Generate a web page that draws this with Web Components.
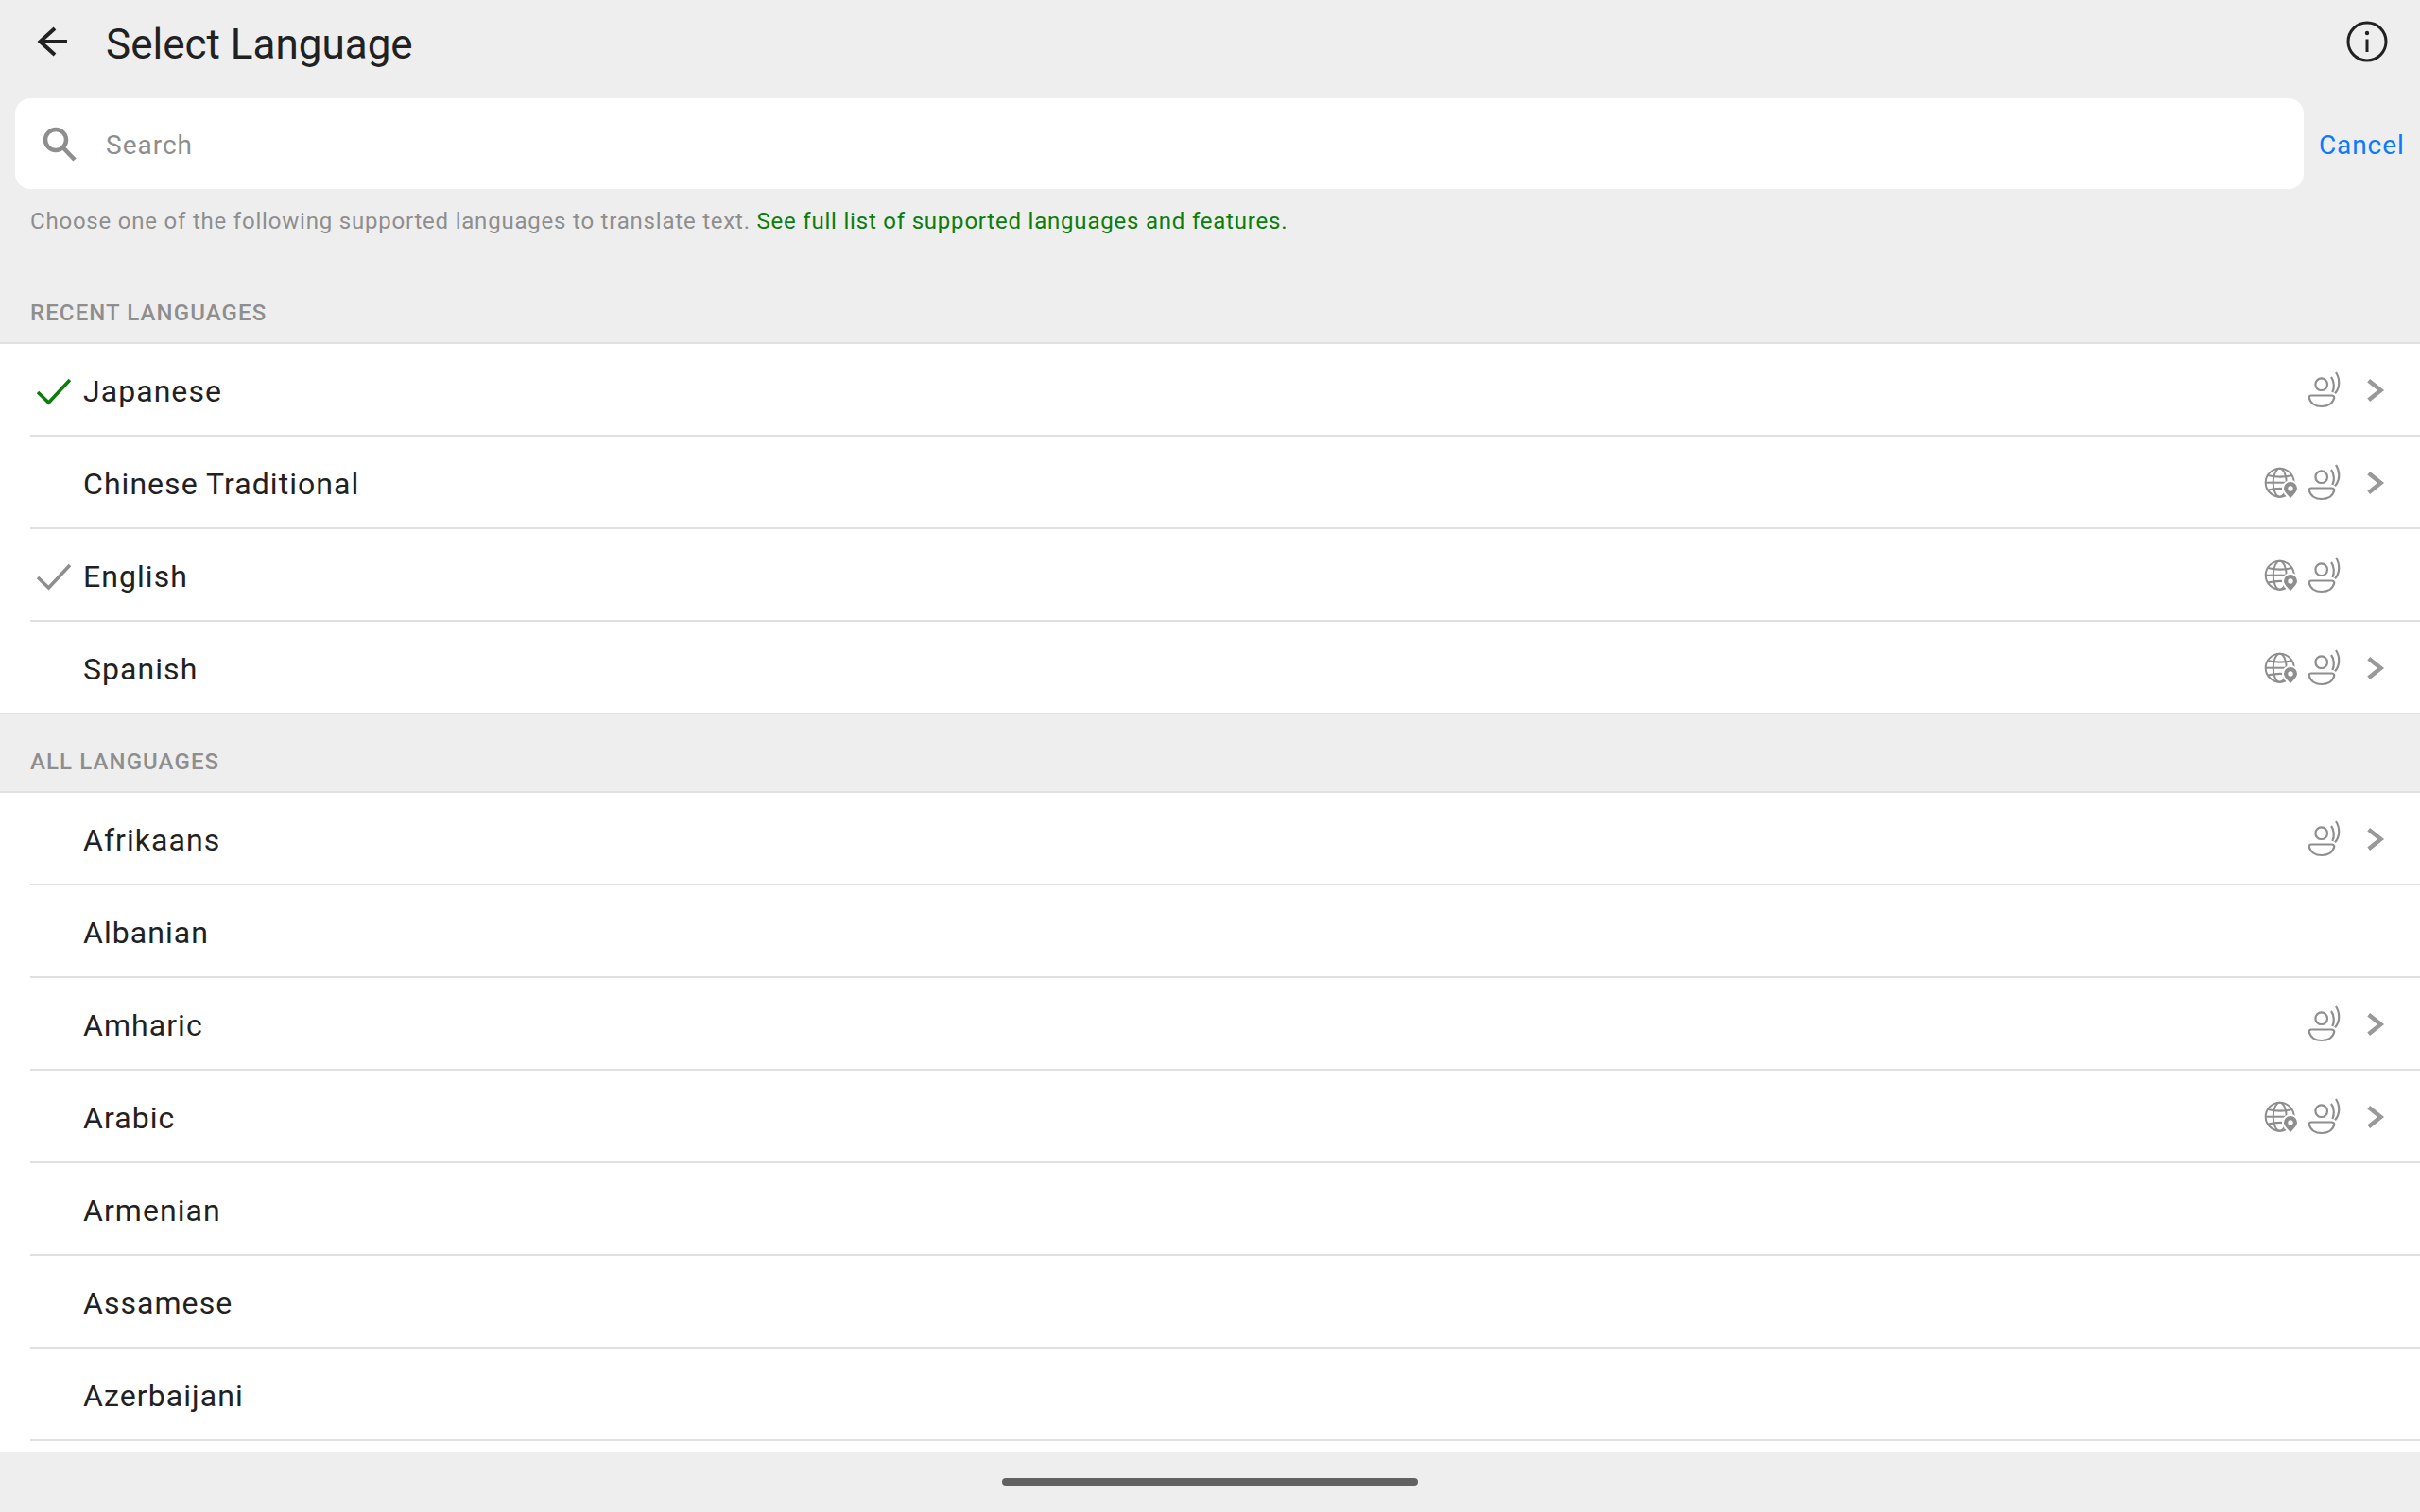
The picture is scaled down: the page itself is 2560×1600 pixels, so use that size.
<!DOCTYPE html>
<html lang="en"><head><meta charset="utf-8"><title>Select Language</title>
<style>
html,body{margin:0;height:100%;background:#eeeeee}
body{font-family:Roboto,"Liberation Sans",sans-serif}
</style></head>
<body>
<language-screen>
  <screen-header title="Select Language"></screen-header>
  <search-bar placeholder="Search" action="Cancel"></search-bar>
  <help-text>Choose one of the following supported languages to translate text. <a slot="link">See full list of supported languages and features.</a></help-text>
  <lang-section label="RECENT LANGUAGES" first>
    <lang-row check="green" voice chevron>Japanese</lang-row>
    <lang-row globe voice chevron>Chinese Traditional</lang-row>
    <lang-row check="gray" globe voice>English</lang-row>
    <lang-row globe voice chevron last>Spanish</lang-row>
  </lang-section>
  <lang-section label="ALL LANGUAGES">
    <lang-row voice chevron>Afrikaans</lang-row>
    <lang-row>Albanian</lang-row>
    <lang-row voice chevron>Amharic</lang-row>
    <lang-row globe voice chevron>Arabic</lang-row>
    <lang-row>Armenian</lang-row>
    <lang-row>Assamese</lang-row>
    <lang-row>Azerbaijani</lang-row>
  </lang-section>
  <home-bar></home-bar>
</language-screen>
<script>
function def(name, html, init){
  customElements.define(name, class extends HTMLElement{
    constructor(){super();this.attachShadow({mode:'open'}).innerHTML=html;}
    connectedCallback(){ if(init) init(this, this.shadowRoot); }
  });
}
def('language-screen',`<style>
:host{display:flex;flex-direction:column;height:1600px;width:2560px;overflow:hidden;background:#eee}
</style><slot></slot>`);

def('screen-header',`<style>
:host{display:flex;align-items:center;box-sizing:border-box;height:104px;padding-bottom:16px;flex:none;color:#212121}
.back{width:48px;height:48px;margin-left:32px;flex:none}
h1{margin:6px 0 0 32px;font:400 44px/52px Roboto,sans-serif;flex:1}
.info{width:48px;height:48px;margin-right:32px;flex:none}
svg{display:block}
</style>
<svg class="back" viewBox="0 0 48 48" fill="none" stroke="#212121" stroke-width="4"><path d="M39 24H11"/><path d="M26 10 10.500 24 26 38"/></svg>
<h1></h1>
<svg class="info" viewBox="0 0 48 48" fill="none" stroke="#212121"><circle cx="24" cy="24" r="20" stroke-width="3"/><path d="M24 21.500V35" stroke-width="3"/><circle cx="24" cy="15" r="2.200" fill="#212121" stroke="none"/></svg>`,
(el,s)=>{s.querySelector('h1').textContent=el.getAttribute('title');});

def('search-bar',`<style>
:host{display:flex;align-items:center;flex:none;padding-left:16px;height:96px}
.box{width:2421px;height:96px;box-sizing:border-box;background:#fff;border-radius:16px;display:flex;align-items:center;flex:none}
svg{width:40px;height:40px;margin-left:26px;flex:none}
.ph{margin:4px 0 0 30px;font:400 28px/36px Roboto,sans-serif;letter-spacing:1px;color:#8e8e8e}
.act{margin:4px 0 0 16px;font:400 28px/36px Roboto,sans-serif;letter-spacing:.9px;color:#0a7aff}
</style>
<div class="box"><svg viewBox="0 0 40 40" fill="none" stroke="#8e8e8e" stroke-width="4.500"><circle cx="17" cy="16" r="11"/><path d="M25 24.500 37 37"/></svg><span class="ph"></span></div><span class="act"></span>`,
(el,s)=>{s.querySelector('.ph').textContent=el.getAttribute('placeholder');s.querySelector('.act').textContent=el.getAttribute('action');});

def('help-text',`<style>
:host{display:block;flex:none;padding:18px 32px 0;height:58px;font:400 24px/32px Roboto,sans-serif;letter-spacing:.79px;color:#8e8e8e}
::slotted(a){color:#0a7d0a}
</style><slot></slot><slot name="link"></slot>`);

def('lang-section',`<style>
:host{display:block;flex:none}
.h{display:flex;align-items:flex-end;box-sizing:border-box;padding:0 32px 15px;font:500 24px/32px Roboto,sans-serif;letter-spacing:1.1px;color:#8e8e8e;height:81px}
:host([first]) .h{height:86px;padding-bottom:15px}
.b{background:#fff;border-top:2px solid #e0e0e0;padding-bottom:12px}
:host([first]) .b{padding-bottom:0}
</style><div class="h"></div><div class="b"><slot></slot></div>`,
(el,s)=>{s.querySelector('.h').textContent=el.getAttribute('label');});

const GLOBE=`<svg class="g" viewBox="0 0 40 48" fill="none" stroke="#8e8e8e" stroke-width="2"><circle cx="19.700" cy="24.700" r="15"/><ellipse cx="19.700" cy="24.700" rx="7" ry="15"/><path d="M4.700 24.700h30"/><path d="M7 17c8 2 18 2 26 0M7 32.500c8-2 18-2 26 0"/><path d="M31 43c-2-3.500-8-7-8-12a8 8 0 0 1 16 0c0 5-6 8.500-8 12z" fill="#8e8e8e" stroke="#fff" stroke-width="2"/><circle cx="31" cy="31" r="2.700" fill="#fff" stroke="none"/></svg>`;
const VOICE=`<svg class="v" viewBox="0 0 40 48" fill="none" stroke="#8e8e8e" stroke-width="2.200"><circle cx="19.700" cy="18.700" r="6.300"/><path d="M9 30.500h21.500c2 0 3 1 2.700 2.500C32 38.500 27 42 20 42S8 38.500 6.800 33c-.3-1.500.5-2.500 2.200-2.500z"/><path d="M30 11c3.500 4.500 3.500 11.500 1.300 16"/><path d="M35 6c4.500 7 4.500 16-1 22.300"/></svg>`;
const CHEV=`<svg class="c" viewBox="0 0 32 48" fill="none" stroke="#999" stroke-width="4.500"><path d="M9.700 14.700 22.500 25 9.700 35.300"/></svg>`;
const CHECK=c=>`<svg class="k" viewBox="0 0 40 48" fill="none" stroke="${c}" stroke-width="3.600"><path d="M5 27 16.500 38 39 14"/></svg>`;

def('lang-row',`<style>
:host{display:block;padding-left:32px}
:host([last]){padding-left:0}
.r{height:96px;border-bottom:2px solid #e0e0e0;display:flex;align-items:center}
:host([last]) .r{padding-left:32px}
.m{width:56px;flex:none;height:48px}
.m svg{display:block;width:40px;height:48px;margin-left:3px}
.t{flex:1;font:400 32px/40px Roboto,sans-serif;letter-spacing:1.05px;color:#212121;margin-top:3px}
.i{display:flex;align-items:center;flex:none;margin-right:32px}
.s{flex:none;height:48px;width:40px}
.s.vv{margin-left:4px}
.s.cc{margin-left:20px;width:32px}
.s svg{display:block;width:100%;height:48px}
</style><div class="r"><div class="m"></div><div class="t"><slot></slot></div><div class="i"><div class="s gg"></div><div class="s vv"></div><div class="s cc"></div></div></div>`,
(el,s)=>{
  const c=el.getAttribute('check');
  if(c) s.querySelector('.m').innerHTML=CHECK(c==='green'?'#0a7d0a':'#8e8e8e');
  if(el.hasAttribute('globe')) s.querySelector('.gg').innerHTML=GLOBE;
  if(el.hasAttribute('voice')) s.querySelector('.vv').innerHTML=VOICE;
  if(el.hasAttribute('chevron')) s.querySelector('.cc').innerHTML=CHEV;
});

def('home-bar',`<style>
:host{position:absolute;left:0;top:1536px;width:2560px;height:64px;background:#eee;display:flex;justify-content:center}
i{display:block;width:440px;height:8px;margin-top:28px;border-radius:4px;background:#616161}
</style><i></i>`);
</script>
</body></html>
